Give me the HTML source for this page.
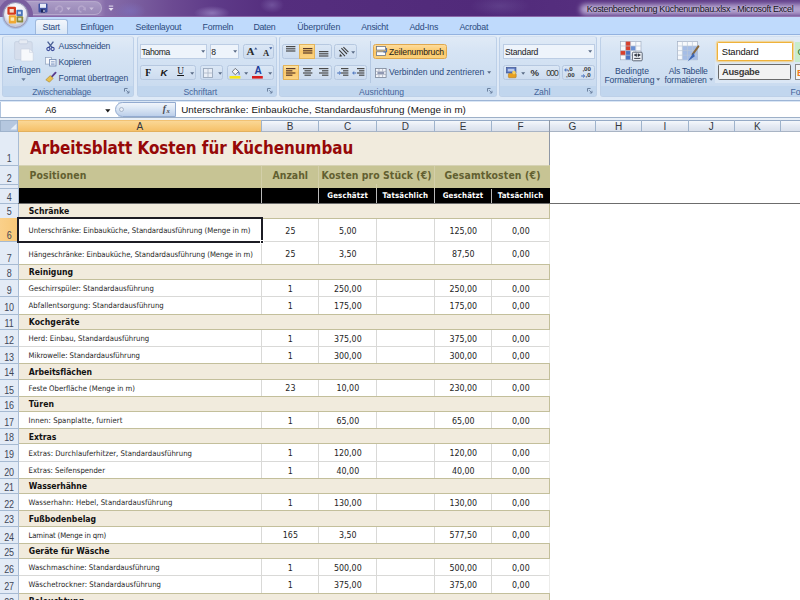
<!DOCTYPE html>
<html lang="de">
<head>
<meta charset="utf-8">
<title>Kostenberechnung Küchenumbau.xlsx - Microsoft Excel</title>
<style>
html,body{margin:0;padding:0;background:#fff;}
body{width:800px;height:600px;overflow:hidden;font-family:"Liberation Sans",sans-serif;}
#app{position:relative;width:800px;height:600px;overflow:hidden;background:#fff;}
#app div,#app span.t,#app svg{position:absolute;box-sizing:border-box;}
#app svg{overflow:visible;}
.t{white-space:pre;}
.num{transform:translateX(-50%);}
.ul{text-decoration:underline;}
.ttl{text-shadow:0 0 2px rgba(225,215,240,.8);}
.titlebar{background:
 radial-gradient(ellipse 16px 9px at 130px 11px,rgba(125,110,185,.75),rgba(125,110,185,0) 100%),
 radial-gradient(ellipse 18px 7px at 212px 13px,rgba(160,140,200,.7),rgba(160,140,200,0) 100%),
 radial-gradient(ellipse 12px 8px at 272px 5px,rgba(130,105,175,.6),rgba(130,105,175,0) 100%),
 radial-gradient(ellipse 30px 10px at 500px 6px,rgba(110,85,155,.45),rgba(110,85,155,0) 100%),
 linear-gradient(90deg,#977fb6 0%,#957db4 12.5%,#866daa 13.2%,#7a5e9f 17%,#6c4a92 21.5%,#5e3a88 27%,#552e7e 34%,#512a7a 60%,#552e7e 72%,#613e8a 100%);border-bottom:1px solid #8a68a8;}
.tglow{background:rgba(182,168,210,.95);filter:blur(2.6px);border-radius:6px;}
.qat{border-radius:0 7px 7px 0;background:linear-gradient(#ab9cc6,#a191be 50%,#9a8ab8);border:1px solid #b5a8cc;border-left:none;}
.tabrow{background:#bfdafc;}
.tabsel{border:1px solid #9fb9dc;border-bottom:none;border-radius:3px 3px 0 0;background:linear-gradient(#f2f6fc,#e2ecf8 60%,#d9e6f5);}
.ribbon{background:linear-gradient(#e3edf8,#dde8f6 50%,#dfeaf7);border-top:1px solid #93b2e0;}
.grp{border:1px solid #bdd0e8;border-top-color:#d3e0f0;border-radius:3px;background:linear-gradient(#e0eaf6,#d6e4f4 25%,#cbdcf0 82%);overflow:hidden;}
.glab{background:#c1d6ee;}
.combo{background:#eef4fb;border:1px solid #bccde4;}
.btng{border:1px solid #b6c8e0;border-radius:2.5px;background:linear-gradient(#dbe7f5,#cddcef);}
.hot{background:linear-gradient(#fde3a4,#fbc96a 50%,#fbd384);border:1px solid #e3b45c;}
.hotbtn{background:linear-gradient(#fddc9c,#fbc766 55%,#fbd27e);border:1px solid #dfa84e;border-radius:2.5px;}
.gal{background:rgba(228,238,249,.6);}
.fbar{background:#d9e6f5;}
.fxpill{border:1px solid #93abd0;border-radius:8px 0 0 8px;background:linear-gradient(#f1f5fb,#dde8f5 40%,#bccfea);}
.colhead{background:linear-gradient(#f5f8fc,#e6ebf4 45%,#d9e0ec);border-top:1px solid #96aac6;border-bottom:1px solid #a9b4c4;}
.corner{background:#b5c7df;border:1px solid #9fb3cc;}
.colsel{background:linear-gradient(#fad796,#f8cc7e 50%,#f5c069);border-top:1px solid #f1c273;border-bottom:1px solid #e3b05c;}
.rowhead{background:#e3ebf6;}
.rowsel{background:linear-gradient(90deg,#fad08a,#f8c878);border-right:1px solid #e0a850;}
.rn{letter-spacing:-0.3px;transform:translateX(-50%) scaleX(.86);}
.obsh{border-radius:50%;background:rgba(140,156,188,.4);}
.ob{border-radius:50%;border:0.7px solid #9a96b4;background:radial-gradient(circle at 50% 40%,#fff 0,#f5f6fa 40%,#e4e7f0 56%,#c6cadb 68%);}

</style>
</head>
<body>
<div id="app">
<div class="titlebar" style="left:0px;top:0px;width:800px;height:16.6px;"></div>
<div class="tglow" style="left:580px;top:4.4px;width:240px;height:10.2px;"></div>
<div class="qat" style="left:26px;top:1px;width:76.4px;height:13.6px;"></div>
<div style="left:-1.6px;top:-2.0px;width:34.4px;height:34.4px;border-radius:50%;background:radial-gradient(circle,#7a5e9f 0,#7a5e9f 82%,rgba(125,98,164,.5) 92%,rgba(125,98,164,0) 100%);"></div>
<span class="t ttl" style="left:586.8px;top:2.6px;font-size:9.0px;line-height:12.6px;color:#141018;letter-spacing:-0.324px;">Kostenberechnung Küchenumbau.xlsx - Microsoft Excel</span>
<svg style="left:38px;top:3px;width:10px;height:10px" viewBox="0 0 10 10"><rect x="0.5" y="0.5" width="9" height="9" rx="1" fill="#3d4f9e"/><rect x="2" y="0.8" width="6" height="4" fill="#e8ecf8"/><rect x="3" y="6.3" width="4" height="3.2" fill="#1c2458"/><rect x="5.4" y="6.8" width="1.2" height="2.2" fill="#dfe3f3"/></svg>
<svg style="left:55px;top:4px;width:9px;height:9px" viewBox="0 0 9 9"><path d="M1.5 5.5 A3 3 0 1 1 4.5 8" fill="none" stroke="#b5a6cc" stroke-width="1.5"/><path d="M0 3 L3.4 5.6 L0.2 6.8 Z" fill="#b5a6cc"/></svg>
<svg style="left:66px;top:7px;width:5px;height:4px" viewBox="0 0 5 4"><path d="M0.3 0.5 L4.7 0.5 L2.5 3.2 Z" fill="#c9bedb"/></svg>
<svg style="left:77px;top:4px;width:9px;height:9px" viewBox="0 0 9 9"><path d="M7.5 5.5 A3 3 0 1 0 4.5 8" fill="none" stroke="#b5a6cc" stroke-width="1.5"/><path d="M9 3 L5.6 5.6 L8.8 6.8 Z" fill="#b5a6cc"/></svg>
<svg style="left:89px;top:7px;width:5px;height:4px" viewBox="0 0 5 4"><path d="M0.3 0.5 L4.7 0.5 L2.5 3.2 Z" fill="#c9bedb"/></svg>
<svg style="left:107.5px;top:5px;width:6px;height:7px" viewBox="0 0 6 7"><rect x="0.8" y="0.6" width="4.4" height="1" fill="#e6e0f0"/><path d="M0.5 3 L5.5 3 L3 6 Z" fill="#e6e0f0"/></svg>
<div class="tabrow" style="left:0px;top:16.6px;width:800px;height:18px;"></div>
<div class="tabsel" style="left:35px;top:19.2px;width:33.2px;height:16px;"></div>
<span class="t" style="left:42.6px;top:21.05px;font-size:8.8px;line-height:12.3px;color:#2b4a7d;letter-spacing:-0.276px;">Start</span>
<span class="t" style="left:80.4px;top:21.05px;font-size:8.8px;line-height:12.3px;color:#2b4a7d;letter-spacing:-0.217px;">Einfügen</span>
<span class="t" style="left:135.6px;top:21.05px;font-size:8.8px;line-height:12.3px;color:#2b4a7d;letter-spacing:-0.235px;">Seitenlayout</span>
<span class="t" style="left:202.6px;top:21.05px;font-size:8.8px;line-height:12.3px;color:#2b4a7d;letter-spacing:-0.238px;">Formeln</span>
<span class="t" style="left:253.4px;top:21.05px;font-size:8.8px;line-height:12.3px;color:#2b4a7d;letter-spacing:-0.297px;">Daten</span>
<span class="t" style="left:297.2px;top:21.05px;font-size:8.8px;line-height:12.3px;color:#2b4a7d;letter-spacing:-0.102px;">Überprüfen</span>
<span class="t" style="left:361.2px;top:21.05px;font-size:8.8px;line-height:12.3px;color:#2b4a7d;letter-spacing:-0.266px;">Ansicht</span>
<span class="t" style="left:409.4px;top:21.05px;font-size:8.8px;line-height:12.3px;color:#2b4a7d;letter-spacing:-0.218px;">Add-Ins</span>
<span class="t" style="left:459.4px;top:21.05px;font-size:8.8px;line-height:12.3px;color:#2b4a7d;letter-spacing:-0.218px;">Acrobat</span>
<div class="obsh" style="left:1.6px;top:2.0px;width:27.4px;height:27.4px;"></div>
<div class="ob" style="left:2.6px;top:2.4px;width:25.2px;height:25.2px;"></div>
<svg style="left:1px;top:0px;width:30px;height:30px" viewBox="0 0 30 30"><rect x="6.4" y="6.8" width="8.6" height="8" rx="1.2" fill="#d43a1e"/><rect x="8.6" y="9" width="4.2" height="3.6" fill="#f3d9c8"/>
<rect x="15.4" y="9.8" width="6.4" height="6.4" rx="1" fill="#4a74b8"/><rect x="17" y="11.6" width="3" height="2.6" fill="#c8d6ee"/>
<rect x="7.8" y="15.2" width="7.6" height="8.2" rx="1" fill="#f0a832"/><rect x="9.6" y="17.4" width="3.6" height="3.4" fill="#fbe9b4"/>
<rect x="15.6" y="16.2" width="6.6" height="6.2" rx="1" fill="#8a8a3c"/><rect x="17.2" y="17.8" width="3.2" height="2.8" fill="#d8dcc0"/></svg>
<div class="ribbon" style="left:0px;top:34.2px;width:800px;height:66px;"></div>
<div class="grp" style="left:1.6px;top:35.6px;width:132.6px;height:61.8px;"><div class="glab" style="left:0;right:0;bottom:0;height:10.4px"></div></div>
<span class="t" style="left:32.2px;top:86.2px;font-size:8.6px;line-height:12.0px;color:#45659a;letter-spacing:-0.236px;">Zwischenablage</span>
<svg style="left:124.4px;top:87.9px;width:5.4px;height:5.4px" viewBox="0 0 5.4 5.4"><path d="M0.5 3.6 V0.5 H3.6" fill="none" stroke="#6a7f9e" stroke-width="1"/><path d="M2.2 2.2 L5 5 M5 2.8 V5 H2.8" fill="none" stroke="#6a7f9e" stroke-width="0.9"/></svg>
<div class="grp" style="left:136.8px;top:35.6px;width:140.4px;height:61.8px;"><div class="glab" style="left:0;right:0;bottom:0;height:10.4px"></div></div>
<span class="t" style="left:183.4px;top:86.2px;font-size:8.6px;line-height:12.0px;color:#45659a;letter-spacing:-0.079px;">Schriftart</span>
<svg style="left:267.4px;top:87.9px;width:5.4px;height:5.4px" viewBox="0 0 5.4 5.4"><path d="M0.5 3.6 V0.5 H3.6" fill="none" stroke="#6a7f9e" stroke-width="1"/><path d="M2.2 2.2 L5 5 M5 2.8 V5 H2.8" fill="none" stroke="#6a7f9e" stroke-width="0.9"/></svg>
<div class="grp" style="left:279.2px;top:35.6px;width:217.4px;height:61.8px;"><div class="glab" style="left:0;right:0;bottom:0;height:10.4px"></div></div>
<span class="t" style="left:359.0px;top:86.2px;font-size:8.6px;line-height:12.0px;color:#45659a;letter-spacing:-0.036px;">Ausrichtung</span>
<svg style="left:486.8px;top:87.9px;width:5.4px;height:5.4px" viewBox="0 0 5.4 5.4"><path d="M0.5 3.6 V0.5 H3.6" fill="none" stroke="#6a7f9e" stroke-width="1"/><path d="M2.2 2.2 L5 5 M5 2.8 V5 H2.8" fill="none" stroke="#6a7f9e" stroke-width="0.9"/></svg>
<div class="grp" style="left:499.4px;top:35.6px;width:97.8px;height:61.8px;"><div class="glab" style="left:0;right:0;bottom:0;height:10.4px"></div></div>
<span class="t" style="left:534.0px;top:86.2px;font-size:8.6px;line-height:12.0px;color:#45659a;letter-spacing:-0.130px;">Zahl</span>
<svg style="left:587.4px;top:87.9px;width:5.4px;height:5.4px" viewBox="0 0 5.4 5.4"><path d="M0.5 3.6 V0.5 H3.6" fill="none" stroke="#6a7f9e" stroke-width="1"/><path d="M2.2 2.2 L5 5 M5 2.8 V5 H2.8" fill="none" stroke="#6a7f9e" stroke-width="0.9"/></svg>
<div class="grp" style="left:600.2px;top:35.6px;width:229.8px;height:61.8px;"><div class="glab" style="left:0;right:0;bottom:0;height:10.4px"></div></div>
<span class="t" style="left:790.6px;top:86.2px;font-size:8.6px;line-height:12.0px;color:#45659a;">Fo</span>
<svg style="left:14px;top:39px;width:22px;height:27px" viewBox="0 0 22 27"><rect x="0.6" y="2.6" width="17.6" height="18" rx="1.5" fill="#d6deec" stroke="#c3cee0" stroke-width="0.7"/>
<rect x="5" y="0.8" width="8.6" height="4" rx="1.2" fill="#e6ebf3" stroke="#bcc8da" stroke-width="0.6"/>
<path d="M7 10 H15.6 L19.2 13.4 V22 H7 Z" fill="#f7f9fc" stroke="#c9d2e0" stroke-width="0.6"/><path d="M15.6 10 V13.4 H19.2" fill="none" stroke="#c9d2e0" stroke-width="0.6"/></svg>
<span class="t" style="left:7.0px;top:64.1px;font-size:8.6px;line-height:12.0px;color:#2b4a7d;letter-spacing:-0.067px;">Einfügen</span>
<svg style="left:21px;top:77.6px;width:5px;height:3.4px" viewBox="0 0 5 3.4"><path d="M0.3 0.3 L4.7 0.3 L2.5 3 Z" fill="#6a7f9e"/></svg>
<span class="t" style="left:58.6px;top:40.2px;font-size:8.6px;line-height:12.0px;color:#2b4a7d;letter-spacing:-0.200px;">Ausschneiden</span>
<span class="t" style="left:58.6px;top:55.9px;font-size:8.6px;line-height:12.0px;color:#2b4a7d;letter-spacing:-0.251px;">Kopieren</span>
<span class="t" style="left:58.6px;top:71.6px;font-size:8.6px;line-height:12.0px;color:#2b4a7d;letter-spacing:-0.092px;">Format übertragen</span>
<svg style="left:46px;top:41px;width:9px;height:10px" viewBox="0 0 9 10"><path d="M1.6 0.6 L6 6.4 M7.4 0.6 L3 6.4" stroke="#4a5f94" stroke-width="1.3" fill="none"/><circle cx="2.4" cy="8" r="1.6" fill="none" stroke="#3a4a9a" stroke-width="1.1"/><circle cx="6.6" cy="8" r="1.6" fill="none" stroke="#3a4a9a" stroke-width="1.1"/></svg>
<svg style="left:44.6px;top:57px;width:12px;height:10px" viewBox="0 0 12 10"><rect x="0.5" y="0.5" width="6" height="6.6" fill="#f6f8fc" stroke="#8fa0bc" stroke-width="0.7"/><rect x="4.6" y="2.4" width="6.4" height="6.6" fill="#eef2f9" stroke="#6f86ae" stroke-width="0.8"/><path d="M6 4.6 H9.6 M6 6.2 H9.6 M6 7.6 H9.6" stroke="#7f98c4" stroke-width="0.7"/></svg>
<svg style="left:45px;top:72.4px;width:12px;height:11px" viewBox="0 0 12 11"><path d="M10.6 0.6 L6.4 5.2" stroke="#5a3c8c" stroke-width="1.8" stroke-linecap="round"/><path d="M5.2 3.6 L8.2 6.4 L4.4 10.2 L0.8 7.8 Z" fill="#e8c050" stroke="#a8842c" stroke-width="0.6"/></svg>
<div class="combo" style="left:139.6px;top:44.4px;width:67.6px;height:14.8px;"></div>
<div class="combo" style="left:209.6px;top:44.4px;width:29.6px;height:14.8px;"></div>
<span class="t" style="left:141.6px;top:46.4px;font-size:8.6px;line-height:12.0px;color:#1a1a1a;letter-spacing:-0.363px;">Tahoma</span>
<span class="t" style="left:211.2px;top:46.4px;font-size:8.6px;line-height:12.0px;color:#1a1a1a;letter-spacing:-0.181px;">8</span>
<svg style="left:201.4px;top:50.4px;width:4.4px;height:3px" viewBox="0 0 4.4 3"><path d="M0.2 0.3 L4.2 0.3 L2.2 2.8 Z" fill="#5a6b86"/></svg>
<svg style="left:232.8px;top:50.4px;width:4.4px;height:3px" viewBox="0 0 4.4 3"><path d="M0.2 0.3 L4.2 0.3 L2.2 2.8 Z" fill="#5a6b86"/></svg>
<div class="btng" style="left:243.2px;top:44.4px;width:31px;height:14.8px;"></div>
<span class="t" style="left:246.4px;top:44.3px;font-size:11px;line-height:15.4px;color:#2a2a2a;font-weight:bold;font-family:'Liberation Serif',serif;">A</span>
<span class="t" style="left:263.0px;top:46.8px;font-size:8.6px;line-height:12.0px;color:#2a2a2a;font-weight:bold;font-family:'Liberation Serif',serif;">A</span>
<svg style="left:254.4px;top:47.2px;width:3.6px;height:2.6px" viewBox="0 0 3.6 2.6"><path d="M0.2 2.4 L3.4 2.4 L1.8 0.2 Z" fill="#3a5a9a"/></svg>
<svg style="left:269.2px;top:47.4px;width:3.6px;height:2.6px" viewBox="0 0 3.6 2.6"><path d="M0.2 0.2 L3.4 0.2 L1.8 2.4 Z" fill="#3a5a9a"/></svg>
<div class="btng" style="left:139.6px;top:64.6px;width:56.6px;height:15.6px;"></div>
<div class="btng" style="left:199.6px;top:64.6px;width:23.6px;height:15.6px;"></div>
<div class="btng" style="left:226.6px;top:64.6px;width:47.6px;height:15.6px;"></div>
<span class="t" style="left:145.2px;top:65.7px;font-size:9.6px;line-height:13.4px;color:#151515;font-weight:bold;font-family:'Liberation Serif',serif;">F</span>
<span class="t" style="left:160.6px;top:65.7px;font-size:9.6px;line-height:13.4px;color:#151515;font-weight:bold;font-style:italic;">K</span>
<span class="t ul" style="left:177.2px;top:65.4px;font-size:9.4px;line-height:13.2px;color:#151515;font-family:'Liberation Serif',serif;">U</span>
<svg style="left:190.0px;top:71.6px;width:4.4px;height:3px" viewBox="0 0 4.4 3"><path d="M0.2 0.3 L4.2 0.3 L2.2 2.8 Z" fill="#5a6b86"/></svg>
<svg style="left:217.6px;top:71.6px;width:4.4px;height:3px" viewBox="0 0 4.4 3"><path d="M0.2 0.3 L4.2 0.3 L2.2 2.8 Z" fill="#5a6b86"/></svg>
<svg style="left:244.2px;top:71.6px;width:4.4px;height:3px" viewBox="0 0 4.4 3"><path d="M0.2 0.3 L4.2 0.3 L2.2 2.8 Z" fill="#5a6b86"/></svg>
<svg style="left:267.8px;top:71.6px;width:4.4px;height:3px" viewBox="0 0 4.4 3"><path d="M0.2 0.3 L4.2 0.3 L2.2 2.8 Z" fill="#5a6b86"/></svg>
<svg style="left:203.4px;top:67.6px;width:10px;height:10px" viewBox="0 0 10 10"><rect x="0.5" y="0.5" width="9" height="9" fill="#e9eef6" stroke="#9aa8bc" stroke-width="0.9"/><path d="M5 0.5 V9.5 M0.5 5 H9.5" stroke="#a8b4c6" stroke-width="0.8"/></svg>
<svg style="left:229.4px;top:66.4px;width:12px;height:13px" viewBox="0 0 12 13"><path d="M3.2 5.8 L6.2 2.4 L9.6 5.4 L6.4 8.8 Z" fill="#f6f6f6" stroke="#555b66" stroke-width="0.8"/><path d="M9.4 5.6 Q11 7.6 10 8.8" stroke="#4a6ab0" stroke-width="1.1" fill="none"/><rect x="0.6" y="10" width="10.8" height="2.6" fill="#f6e616"/></svg>
<span class="t" style="left:254.6px;top:64.2px;font-size:10px;line-height:14.0px;color:#1f3f9a;font-weight:bold;">A</span>
<svg style="left:252.4px;top:76.4px;width:10.8px;height:2.6px" viewBox="0 0 10.8 2.6"><rect x="0" y="0" width="10.8" height="2.6" fill="#d81e1e"/></svg>
<div class="btng" style="left:282.4px;top:44.0px;width:49.4px;height:15.2px;"></div>
<div class="hot" style="left:299.0px;top:44.0px;width:16.4px;height:15.2px;"></div>
<div class="btng" style="left:334.4px;top:44.0px;width:22.8px;height:15.2px;"></div>
<div class="btng" style="left:282.4px;top:64.6px;width:49.4px;height:15.6px;"></div>
<div class="hot" style="left:282.6px;top:64.6px;width:16.2px;height:15.6px;"></div>
<div class="btng" style="left:334.4px;top:64.6px;width:32.8px;height:15.6px;"></div>
<svg style="left:286px;top:46.2px;width:11px;height:6.6px" viewBox="0 0 11 6.6"><rect x="0" y="0.00" width="9.4" height="1.2" fill="#4a4a4a"/><rect x="0" y="2.20" width="9.4" height="1.2" fill="#4a4a4a"/><rect x="0" y="4.40" width="9.4" height="1.2" fill="#4a4a4a"/></svg>
<svg style="left:302.6px;top:48.4px;width:11px;height:6.6px" viewBox="0 0 11 6.6"><rect x="0" y="0.00" width="9.4" height="1.2" fill="#5a3a2a"/><rect x="0" y="2.20" width="9.4" height="1.2" fill="#5a3a2a"/><rect x="0" y="4.40" width="9.4" height="1.2" fill="#5a3a2a"/></svg>
<svg style="left:318.8px;top:51.2px;width:11px;height:6.6px" viewBox="0 0 11 6.6"><rect x="0" y="0.00" width="9.4" height="1.2" fill="#4a4a4a"/><rect x="0" y="2.20" width="9.4" height="1.2" fill="#4a4a4a"/><rect x="0" y="4.40" width="9.4" height="1.2" fill="#4a4a4a"/></svg>
<svg style="left:286px;top:67.6px;width:11px;height:8.8px" viewBox="0 0 11 8.8"><rect x="0" y="0.00" width="9.4" height="1.2" fill="#5a3a2a"/><rect x="0" y="2.20" width="6.4" height="1.2" fill="#5a3a2a"/><rect x="0" y="4.40" width="9.4" height="1.2" fill="#5a3a2a"/><rect x="0" y="6.60" width="6.4" height="1.2" fill="#5a3a2a"/></svg>
<svg style="left:302.6px;top:67.6px;width:11px;height:8.8px" viewBox="0 0 11 8.8"><rect x="0" y="0.00" width="9.4" height="1.2" fill="#4a4a4a"/><rect x="1.5" y="2.20" width="6.4" height="1.2" fill="#4a4a4a"/><rect x="0" y="4.40" width="9.4" height="1.2" fill="#4a4a4a"/><rect x="1.5" y="6.60" width="6.4" height="1.2" fill="#4a4a4a"/></svg>
<svg style="left:318.8px;top:67.6px;width:11px;height:8.8px" viewBox="0 0 11 8.8"><rect x="0" y="0.00" width="9.4" height="1.2" fill="#4a4a4a"/><rect x="3" y="2.20" width="6.4" height="1.2" fill="#4a4a4a"/><rect x="0" y="4.40" width="9.4" height="1.2" fill="#4a4a4a"/><rect x="3" y="6.60" width="6.4" height="1.2" fill="#4a4a4a"/></svg>
<svg style="left:337.6px;top:46.6px;width:12px;height:11px" viewBox="0 0 12 11"><path d="M1.2 3.2 L7 9.2 M3.4 1.2 L9 7 M5.4 0.2 L10.4 5.2" stroke="#3e3e3e" stroke-width="1.1" fill="none"/><path d="M1.4 9.8 L4.4 9.2 L2 6.8 Z" fill="#3e3e3e"/></svg>
<svg style="left:351.4px;top:50.6px;width:4.4px;height:3px" viewBox="0 0 4.4 3"><path d="M0.2 0.3 L4.2 0.3 L2.2 2.8 Z" fill="#5a6b86"/></svg>
<svg style="left:340.6px;top:67.6px;width:11px;height:8.8px" viewBox="0 0 11 8.8"><rect x="0" y="0.00" width="7.4" height="1.2" fill="#4a4a4a"/><rect x="2" y="2.20" width="5.4" height="1.2" fill="#4a4a4a"/><rect x="0" y="4.40" width="7.4" height="1.2" fill="#4a4a4a"/><rect x="2" y="6.60" width="5.4" height="1.2" fill="#4a4a4a"/></svg>
<svg style="left:356.6px;top:67.6px;width:11px;height:8.8px" viewBox="0 0 11 8.8"><rect x="0" y="0.00" width="7.4" height="1.2" fill="#4a4a4a"/><rect x="2" y="2.20" width="5.4" height="1.2" fill="#4a4a4a"/><rect x="0" y="4.40" width="7.4" height="1.2" fill="#4a4a4a"/><rect x="2" y="6.60" width="5.4" height="1.2" fill="#4a4a4a"/></svg>
<svg style="left:336.6px;top:70.6px;width:4.4px;height:4px" viewBox="0 0 4.4 4"><path d="M0.2 2 H3 M2.2 0.6 L3.8 2 L2.2 3.4" stroke="#3a66b8" stroke-width="1" fill="none"/></svg>
<svg style="left:352.4px;top:70.6px;width:4.4px;height:4px" viewBox="0 0 4.4 4"><path d="M4.2 2 H1.4 M2.2 0.6 L0.6 2 L2.2 3.4" stroke="#3a66b8" stroke-width="1" fill="none"/></svg>
<div style="left:370.0px;top:41.4px;width:1px;height:42px;background:#b4c8e2;"></div>
<div class="hotbtn" style="left:373.0px;top:43.8px;width:73.8px;height:15.4px;"></div>
<svg style="left:375.6px;top:46.4px;width:11.4px;height:10.4px" viewBox="0 0 11.4 10.4"><rect x="0.5" y="0.5" width="9" height="3.6" fill="#fdfdfd" stroke="#6a7486" stroke-width="0.8"/><rect x="0.5" y="5.8" width="9" height="3.8" fill="#fdfdfd" stroke="#6a7486" stroke-width="0.8"/><path d="M10.6 2 V6 H7.4" stroke="#3a66b8" stroke-width="1" fill="none"/></svg>
<span class="t" style="left:389.0px;top:45.6px;font-size:8.6px;line-height:12.0px;color:#1c1c1c;letter-spacing:-0.142px;">Zeilenumbruch</span>
<svg style="left:375.4px;top:67.6px;width:11.6px;height:10px" viewBox="0 0 11.6 10"><rect x="0.5" y="0.5" width="10.6" height="9" fill="#f4f6fa" stroke="#7a8598" stroke-width="0.8"/><path d="M0.5 3.4 H11 M0.5 6.6 H11 M4 0.5 V3.4 M7.6 0.5 V3.4 M4 6.6 V9.5 M7.6 6.6 V9.5" stroke="#8e99ad" stroke-width="0.6"/><path d="M2.4 5 H9.2" stroke="#2a3a6a" stroke-width="1"/></svg>
<span class="t" style="left:389.0px;top:66.4px;font-size:8.6px;line-height:12.0px;color:#2b4a7d;letter-spacing:-0.035px;">Verbinden und zentrieren</span>
<svg style="left:487.4px;top:71.4px;width:4.4px;height:3px" viewBox="0 0 4.4 3"><path d="M0.2 0.3 L4.2 0.3 L2.2 2.8 Z" fill="#5a6b86"/></svg>
<div class="combo" style="left:502.6px;top:44.0px;width:92.2px;height:15.2px;"></div>
<span class="t" style="left:505.0px;top:46.3px;font-size:8.6px;line-height:12.0px;color:#1a1a1a;letter-spacing:-0.211px;">Standard</span>
<svg style="left:587.6px;top:50.4px;width:4.4px;height:3px" viewBox="0 0 4.4 3"><path d="M0.2 0.3 L4.2 0.3 L2.2 2.8 Z" fill="#5a6b86"/></svg>
<div class="btng" style="left:502.6px;top:64.6px;width:57.2px;height:15.6px;"></div>
<div class="btng" style="left:562.4px;top:64.6px;width:32.4px;height:15.6px;"></div>
<svg style="left:505.6px;top:66.6px;width:11px;height:11.4px" viewBox="0 0 11 11.4"><rect x="0.4" y="0.4" width="9.6" height="5.6" fill="#5a78c0" stroke="#3a4f8a" stroke-width="0.6"/><rect x="1.8" y="1.8" width="6.6" height="2.6" fill="#b8c8ea"/><rect x="2.4" y="6.4" width="7.8" height="4.4" rx="1" fill="#e8a020" stroke="#a87010" stroke-width="0.5"/><circle cx="8" cy="5.6" r="1.8" fill="#f6d060"/></svg>
<svg style="left:520.6px;top:71.6px;width:4.4px;height:3px" viewBox="0 0 4.4 3"><path d="M0.2 0.3 L4.2 0.3 L2.2 2.8 Z" fill="#5a6b86"/></svg>
<span class="t" style="left:530.6px;top:65.9px;font-size:9.6px;line-height:13.4px;color:#333;font-weight:bold;letter-spacing:0.069px;">%</span>
<span class="t" style="left:546.2px;top:66.6px;font-size:8.6px;line-height:12.0px;color:#333;letter-spacing:-0.915px;">000</span>
<span class="t" style="left:567.6px;top:65.25px;font-size:6.2px;line-height:8.7px;color:#333;font-weight:bold;">,0</span>
<span class="t" style="left:566.0px;top:71.05px;font-size:6.2px;line-height:8.7px;color:#333;font-weight:bold;">,00</span>
<span class="t" style="left:582.4px;top:65.25px;font-size:6.2px;line-height:8.7px;color:#333;font-weight:bold;">,00</span>
<span class="t" style="left:585.6px;top:71.05px;font-size:6.2px;line-height:8.7px;color:#333;font-weight:bold;">,0</span>
<svg style="left:564.2px;top:67.6px;width:4.4px;height:4px" viewBox="0 0 4.4 4"><path d="M4.2 2 H1.4 M2.2 0.6 L0.6 2 L2.2 3.4" stroke="#3a66b8" stroke-width="1" fill="none"/></svg>
<svg style="left:580.8px;top:73.6px;width:4.4px;height:4px" viewBox="0 0 4.4 4"><path d="M0.2 2 H3 M2.2 0.6 L3.8 2 L2.2 3.4" stroke="#3a66b8" stroke-width="1" fill="none"/></svg>
<svg style="left:620px;top:41px;width:23px;height:21px" viewBox="0 0 23 21"><rect x="0.4" y="0.4" width="20.6" height="18.4" fill="#f7f9fc" stroke="#a3b0c4" stroke-width="0.7"/>
<rect x="5.6" y="0.6" width="5" height="9" fill="#d8402c"/><rect x="5.6" y="9.6" width="5" height="9" fill="#4a74c4"/><rect x="10.6" y="5" width="5" height="4.6" fill="#6a90d4"/><rect x="0.6" y="9.6" width="5" height="4.6" fill="#d8402c"/>
<path d="M0.4 5 H21 M0.4 9.6 H21 M0.4 14.2 H21 M5.6 0.4 V18.8 M10.6 0.4 V18.8 M15.8 0.4 V18.8" stroke="#b6c2d4" stroke-width="0.7"/>
<rect x="12.4" y="11.2" width="9.8" height="8.6" rx="1" fill="#eef1f6" stroke="#4e5868" stroke-width="0.9"/><path d="M14.2 14 L16.6 12.8 V15.4 Z M20.4 14 L18 12.8 V15.4 Z" stroke="#2a2f3a" stroke-width="0.6" fill="#2a2f3a"/><path d="M14.2 17.4 H20.4" stroke="#2a2f3a" stroke-width="0.9"/></svg>
<span class="t" style="left:615.0px;top:64.8px;font-size:8.6px;line-height:12.0px;color:#2b4a7d;letter-spacing:0.008px;">Bedingte</span>
<span class="t" style="left:604.4px;top:73.8px;font-size:8.6px;line-height:12.0px;color:#2b4a7d;letter-spacing:-0.092px;">Formatierung</span>
<svg style="left:656.2px;top:78.4px;width:4.4px;height:3px" viewBox="0 0 4.4 3"><path d="M0.2 0.3 L4.2 0.3 L2.2 2.8 Z" fill="#5a6b86"/></svg>
<svg style="left:677px;top:41px;width:23px;height:22px" viewBox="0 0 23 22"><rect x="0.4" y="0.4" width="20" height="18.4" fill="#f7f9fc" stroke="#a3b0c4" stroke-width="0.7"/>
<rect x="5.4" y="5" width="15" height="13.8" fill="#a5bde6"/>
<path d="M0.4 5 H20.4 M0.4 9.6 H20.4 M0.4 14.2 H20.4 M5.4 0.4 V18.8 M10.4 0.4 V18.8 M15.4 0.4 V18.8" stroke="#bcc8da" stroke-width="0.7"/>
<path d="M21.4 5.4 L15.6 13.4" stroke="#8a6a3c" stroke-width="2" stroke-linecap="round"/><path d="M16.6 11.6 L10.6 20.4 L17.8 15.2 Z" fill="#3c66b4"/></svg>
<span class="t" style="left:668.8px;top:64.8px;font-size:8.6px;line-height:12.0px;color:#2b4a7d;letter-spacing:-0.237px;">Als Tabelle</span>
<span class="t" style="left:664.4px;top:73.8px;font-size:8.6px;line-height:12.0px;color:#2b4a7d;letter-spacing:-0.097px;">formatieren</span>
<svg style="left:709.0px;top:78.4px;width:4.4px;height:3px" viewBox="0 0 4.4 3"><path d="M0.2 0.3 L4.2 0.3 L2.2 2.8 Z" fill="#5a6b86"/></svg>
<div class="gal" style="left:714.6px;top:40.4px;width:90px;height:42.4px;"></div>
<div style="left:716.6px;top:41.8px;width:76px;height:19.6px;background:#fff;border:1.4px solid #efb23a;box-shadow:0 0 1.5px 0.5px rgba(245,200,110,.8);border-radius:1.5px;"></div>
<span class="t" style="left:721.8px;top:44.8px;font-size:9.4px;line-height:13.2px;color:#111;letter-spacing:-0.158px;">Standard</span>
<div style="left:718.4px;top:63.8px;width:72.4px;height:15.8px;background:#f2f2f2;border:1px solid #6a6a6a;border-radius:1.5px;"></div>
<span class="t" style="left:722.0px;top:65.4px;font-size:9.4px;line-height:13.2px;color:#3a3a3a;font-weight:bold;letter-spacing:-0.313px;">Ausgabe</span>
<div style="left:795.2px;top:41.6px;width:10px;height:20.2px;background:#c8eccc;"></div>
<span class="t" style="left:797.4px;top:45.0px;font-size:9.4px;line-height:13.2px;color:#1a6a1a;">G</span>
<div style="left:795.2px;top:64.0px;width:10px;height:16.2px;background:#f3f3f3;border:1px solid #8a8a8a;"></div>
<span class="t" style="left:797.0px;top:65.6px;font-size:9.4px;line-height:13.2px;color:#f07a1c;font-weight:bold;">B</span>
<div class="fbar" style="left:0px;top:99.8px;width:800px;height:19.8px;"></div>
<div style="left:0px;top:100.2px;width:800px;height:1px;background:#9db5d6;"></div>
<div style="left:0px;top:102.2px;width:118px;height:14.8px;background:#fff;border-left:1px solid #b0c4de;"></div>
<div style="left:175.4px;top:102.2px;width:624.6px;height:14.8px;background:#fff;"></div>
<div style="left:0px;top:116.6px;width:800px;height:3.2px;background:#e9f0f8;border-top:1px solid #9db0c8;"></div>
<div class="fxpill" style="left:114.6px;top:101.6px;width:61.4px;height:15.4px;"></div>
<svg style="left:119.0px;top:107.4px;width:5px;height:5px" viewBox="0 0 5 5"><circle cx="2.5" cy="2.5" r="2" fill="#e8eef6" stroke="#9aaac0" stroke-width="0.8"/></svg>
<span class="t" style="left:45.2px;top:103.75px;font-size:9.2px;line-height:12.9px;color:#141414;letter-spacing:-0.025px;">A6</span>
<svg style="left:105.2px;top:108.6px;width:5.6px;height:3.6px" viewBox="0 0 5.6 3.6"><path d="M0.2 0.3 L5.4 0.3 L2.8 3.4 Z" fill="#1a1a1a"/></svg>
<span class="t" style="left:162.8px;top:102.3px;font-size:9.6px;line-height:13.4px;color:#4a4a52;font-weight:bold;font-style:italic;font-family:'Liberation Serif',serif;">f</span>
<span class="t" style="left:166.6px;top:106.0px;font-size:6.6px;line-height:9.2px;color:#4a4a52;font-weight:bold;font-style:italic;font-family:'Liberation Serif',serif;">x</span>
<span class="t" style="left:181.2px;top:103.35px;font-size:9.8px;line-height:13.7px;color:#141414;letter-spacing:0.073px;">Unterschränke: Einbauküche, Standardausführung (Menge in m)</span>
<div class="colhead" style="left:0px;top:119.6px;width:800px;height:12.4px;"></div>
<div class="corner" style="left:0px;top:119.6px;width:18.2px;height:12.4px;"></div>
<svg style="left:9.6px;top:122.6px;width:7px;height:7px" viewBox="0 0 7 7"><path d="M6.6 0.4 V6.6 H0.4 Z" fill="#e6eef8"/></svg>
<div class="colsel" style="left:18.2px;top:119.6px;width:243.4px;height:12.4px;"></div>
<div style="left:261.1px;top:119.6px;width:1px;height:12.4px;background:#9fb3cc;"></div>
<div style="left:318.1px;top:119.6px;width:1px;height:12.4px;background:#9fb3cc;"></div>
<div style="left:376.0px;top:119.6px;width:1px;height:12.4px;background:#9fb3cc;"></div>
<div style="left:433.75px;top:119.6px;width:1px;height:12.4px;background:#9fb3cc;"></div>
<div style="left:491.25px;top:119.6px;width:1px;height:12.4px;background:#9fb3cc;"></div>
<div style="left:548.9px;top:119.6px;width:1px;height:12.4px;background:#9fb3cc;"></div>
<div style="left:595.1px;top:119.6px;width:1px;height:12.4px;background:#9fb3cc;"></div>
<div style="left:641.3px;top:119.6px;width:1px;height:12.4px;background:#9fb3cc;"></div>
<div style="left:687.6px;top:119.6px;width:1px;height:12.4px;background:#9fb3cc;"></div>
<div style="left:733.8px;top:119.6px;width:1px;height:12.4px;background:#9fb3cc;"></div>
<div style="left:780.0px;top:119.6px;width:1px;height:12.4px;background:#9fb3cc;"></div>
<span class="t num" style="left:139.9px;top:119.8px;font-size:10.0px;line-height:14.0px;color:#33373f;">A</span>
<span class="t num" style="left:290.1px;top:119.8px;font-size:10.0px;line-height:14.0px;color:#33373f;">B</span>
<span class="t num" style="left:347.55px;top:119.8px;font-size:10.0px;line-height:14.0px;color:#33373f;">C</span>
<span class="t num" style="left:405.38px;top:119.8px;font-size:10.0px;line-height:14.0px;color:#33373f;">D</span>
<span class="t num" style="left:463.0px;top:119.8px;font-size:10.0px;line-height:14.0px;color:#33373f;">E</span>
<span class="t num" style="left:520.58px;top:119.8px;font-size:10.0px;line-height:14.0px;color:#33373f;">F</span>
<span class="t num" style="left:572.5px;top:119.8px;font-size:10.0px;line-height:14.0px;color:#33373f;">G</span>
<span class="t num" style="left:618.7px;top:119.8px;font-size:10.0px;line-height:14.0px;color:#33373f;">H</span>
<span class="t num" style="left:664.95px;top:119.8px;font-size:10.0px;line-height:14.0px;color:#33373f;">I</span>
<span class="t num" style="left:711.2px;top:119.8px;font-size:10.0px;line-height:14.0px;color:#33373f;">J</span>
<span class="t num" style="left:757.4px;top:119.8px;font-size:10.0px;line-height:14.0px;color:#33373f;">K</span>
<div class="rowhead" style="left:0px;top:132.0px;width:18.2px;height:468.0px;"></div>
<div style="left:0px;top:164.5px;width:18.2px;height:1px;background:#a6bad2;"></div>
<span class="t num rn" style="left:9.2px;top:152.2px;font-size:10.4px;line-height:14.6px;color:#3e4656;">1</span>
<div style="left:0px;top:184.1px;width:18.2px;height:1px;background:#a6bad2;"></div>
<span class="t num rn" style="left:9.2px;top:171.8px;font-size:10.4px;line-height:14.6px;color:#3e4656;">2</span>
<div style="left:0px;top:187.9px;width:18.2px;height:1px;background:#a6bad2;"></div>
<div style="left:0px;top:202.9px;width:18.2px;height:1px;background:#a6bad2;"></div>
<span class="t num rn" style="left:9.2px;top:190.6px;font-size:10.4px;line-height:14.6px;color:#3e4656;">4</span>
<div style="left:0px;top:217.5px;width:18.2px;height:1px;background:#a6bad2;"></div>
<span class="t num rn" style="left:9.2px;top:205.2px;font-size:10.4px;line-height:14.6px;color:#3e4656;">5</span>
<div class="rowsel" style="left:0px;top:218.0px;width:18.2px;height:23.7px;"></div>
<div style="left:0px;top:241.2px;width:18.2px;height:1px;background:#a6bad2;"></div>
<span class="t num rn" style="left:9.2px;top:228.9px;font-size:10.4px;line-height:14.6px;color:#3e4656;">6</span>
<div style="left:0px;top:264.0px;width:18.2px;height:1px;background:#a6bad2;"></div>
<span class="t num rn" style="left:9.2px;top:251.7px;font-size:10.4px;line-height:14.6px;color:#3e4656;">7</span>
<div style="left:0px;top:279.2px;width:18.2px;height:1px;background:#a6bad2;"></div>
<span class="t num rn" style="left:9.2px;top:266.9px;font-size:10.4px;line-height:14.6px;color:#3e4656;">8</span>
<div style="left:0px;top:296.45px;width:18.2px;height:1px;background:#a6bad2;"></div>
<span class="t num rn" style="left:9.2px;top:284.15px;font-size:10.4px;line-height:14.6px;color:#3e4656;">9</span>
<div style="left:0px;top:313.7px;width:18.2px;height:1px;background:#a6bad2;"></div>
<span class="t num rn" style="left:9.2px;top:301.4px;font-size:10.4px;line-height:14.6px;color:#3e4656;">10</span>
<div style="left:0px;top:328.9px;width:18.2px;height:1px;background:#a6bad2;"></div>
<span class="t num rn" style="left:9.2px;top:316.6px;font-size:10.4px;line-height:14.6px;color:#3e4656;">11</span>
<div style="left:0px;top:346.15px;width:18.2px;height:1px;background:#a6bad2;"></div>
<span class="t num rn" style="left:9.2px;top:333.85px;font-size:10.4px;line-height:14.6px;color:#3e4656;">12</span>
<div style="left:0px;top:363.4px;width:18.2px;height:1px;background:#a6bad2;"></div>
<span class="t num rn" style="left:9.2px;top:351.1px;font-size:10.4px;line-height:14.6px;color:#3e4656;">13</span>
<div style="left:0px;top:378.6px;width:18.2px;height:1px;background:#a6bad2;"></div>
<span class="t num rn" style="left:9.2px;top:366.3px;font-size:10.4px;line-height:14.6px;color:#3e4656;">14</span>
<div style="left:0px;top:395.85px;width:18.2px;height:1px;background:#a6bad2;"></div>
<span class="t num rn" style="left:9.2px;top:383.55px;font-size:10.4px;line-height:14.6px;color:#3e4656;">15</span>
<div style="left:0px;top:411.05px;width:18.2px;height:1px;background:#a6bad2;"></div>
<span class="t num rn" style="left:9.2px;top:398.75px;font-size:10.4px;line-height:14.6px;color:#3e4656;">16</span>
<div style="left:0px;top:428.3px;width:18.2px;height:1px;background:#a6bad2;"></div>
<span class="t num rn" style="left:9.2px;top:416.0px;font-size:10.4px;line-height:14.6px;color:#3e4656;">17</span>
<div style="left:0px;top:443.5px;width:18.2px;height:1px;background:#a6bad2;"></div>
<span class="t num rn" style="left:9.2px;top:431.2px;font-size:10.4px;line-height:14.6px;color:#3e4656;">18</span>
<div style="left:0px;top:460.75px;width:18.2px;height:1px;background:#a6bad2;"></div>
<span class="t num rn" style="left:9.2px;top:448.45px;font-size:10.4px;line-height:14.6px;color:#3e4656;">19</span>
<div style="left:0px;top:478.0px;width:18.2px;height:1px;background:#a6bad2;"></div>
<span class="t num rn" style="left:9.2px;top:465.7px;font-size:10.4px;line-height:14.6px;color:#3e4656;">20</span>
<div style="left:0px;top:493.2px;width:18.2px;height:1px;background:#a6bad2;"></div>
<span class="t num rn" style="left:9.2px;top:480.9px;font-size:10.4px;line-height:14.6px;color:#3e4656;">21</span>
<div style="left:0px;top:510.45px;width:18.2px;height:1px;background:#a6bad2;"></div>
<span class="t num rn" style="left:9.2px;top:498.15px;font-size:10.4px;line-height:14.6px;color:#3e4656;">22</span>
<div style="left:0px;top:525.65px;width:18.2px;height:1px;background:#a6bad2;"></div>
<span class="t num rn" style="left:9.2px;top:513.35px;font-size:10.4px;line-height:14.6px;color:#3e4656;">23</span>
<div style="left:0px;top:542.9px;width:18.2px;height:1px;background:#a6bad2;"></div>
<span class="t num rn" style="left:9.2px;top:530.6px;font-size:10.4px;line-height:14.6px;color:#3e4656;">24</span>
<div style="left:0px;top:558.1px;width:18.2px;height:1px;background:#a6bad2;"></div>
<span class="t num rn" style="left:9.2px;top:545.8px;font-size:10.4px;line-height:14.6px;color:#3e4656;">25</span>
<div style="left:0px;top:575.35px;width:18.2px;height:1px;background:#a6bad2;"></div>
<span class="t num rn" style="left:9.2px;top:563.05px;font-size:10.4px;line-height:14.6px;color:#3e4656;">26</span>
<div style="left:0px;top:592.6px;width:18.2px;height:1px;background:#a6bad2;"></div>
<span class="t num rn" style="left:9.2px;top:580.3px;font-size:10.4px;line-height:14.6px;color:#3e4656;">27</span>
<div style="left:0px;top:607.8px;width:18.2px;height:1px;background:#a6bad2;"></div>
<span class="t num rn" style="left:9.2px;top:595.5px;font-size:10.4px;line-height:14.6px;color:#3e4656;">28</span>
<div style="left:18px;top:132px;width:532px;height:33px;background:#f1ebdd;"></div>
<div style="left:18px;top:165px;width:532px;height:24px;background:#c7c494;"></div>
<div style="left:18px;top:188.4px;width:532px;height:15.0px;background:#000;"></div>
<div style="left:18px;top:203px;width:532px;height:16px;background:#f1ebdd;border-bottom:1px solid #c3bf9b;border-right:1px solid #c3bf9b;"></div>
<div style="left:18px;top:241px;width:532px;height:1px;background:#d9d9d7;"></div>
<div style="left:261px;top:219px;width:1px;height:22px;background:#d9d9d7;"></div>
<div style="left:318px;top:219px;width:1px;height:22px;background:#d9d9d7;"></div>
<div style="left:376px;top:219px;width:1px;height:22px;background:#d9d9d7;"></div>
<div style="left:434px;top:219px;width:1px;height:22px;background:#d9d9d7;"></div>
<div style="left:491px;top:219px;width:1px;height:22px;background:#d9d9d7;"></div>
<div style="left:549px;top:219px;width:1px;height:23px;background:#ececea;"></div>
<div style="left:261px;top:242px;width:1px;height:22px;background:#d9d9d7;"></div>
<div style="left:318px;top:242px;width:1px;height:22px;background:#d9d9d7;"></div>
<div style="left:376px;top:242px;width:1px;height:22px;background:#d9d9d7;"></div>
<div style="left:434px;top:242px;width:1px;height:22px;background:#d9d9d7;"></div>
<div style="left:491px;top:242px;width:1px;height:22px;background:#d9d9d7;"></div>
<div style="left:549px;top:242px;width:1px;height:22px;background:#ececea;"></div>
<div style="left:18px;top:264px;width:532px;height:16px;background:#f1ebdd;border-top:1px solid #c3bf9b;border-bottom:1px solid #c3bf9b;border-right:1px solid #c3bf9b;"></div>
<div style="left:18px;top:296px;width:532px;height:1px;background:#d9d9d7;"></div>
<div style="left:261px;top:280px;width:1px;height:16px;background:#d9d9d7;"></div>
<div style="left:318px;top:280px;width:1px;height:16px;background:#d9d9d7;"></div>
<div style="left:376px;top:280px;width:1px;height:16px;background:#d9d9d7;"></div>
<div style="left:434px;top:280px;width:1px;height:16px;background:#d9d9d7;"></div>
<div style="left:491px;top:280px;width:1px;height:16px;background:#d9d9d7;"></div>
<div style="left:549px;top:280px;width:1px;height:17px;background:#ececea;"></div>
<div style="left:261px;top:297px;width:1px;height:17px;background:#d9d9d7;"></div>
<div style="left:318px;top:297px;width:1px;height:17px;background:#d9d9d7;"></div>
<div style="left:376px;top:297px;width:1px;height:17px;background:#d9d9d7;"></div>
<div style="left:434px;top:297px;width:1px;height:17px;background:#d9d9d7;"></div>
<div style="left:491px;top:297px;width:1px;height:17px;background:#d9d9d7;"></div>
<div style="left:549px;top:297px;width:1px;height:17px;background:#ececea;"></div>
<div style="left:18px;top:314px;width:532px;height:16px;background:#f1ebdd;border-top:1px solid #c3bf9b;border-bottom:1px solid #c3bf9b;border-right:1px solid #c3bf9b;"></div>
<div style="left:18px;top:346px;width:532px;height:1px;background:#d9d9d7;"></div>
<div style="left:261px;top:330px;width:1px;height:16px;background:#d9d9d7;"></div>
<div style="left:318px;top:330px;width:1px;height:16px;background:#d9d9d7;"></div>
<div style="left:376px;top:330px;width:1px;height:16px;background:#d9d9d7;"></div>
<div style="left:434px;top:330px;width:1px;height:16px;background:#d9d9d7;"></div>
<div style="left:491px;top:330px;width:1px;height:16px;background:#d9d9d7;"></div>
<div style="left:549px;top:330px;width:1px;height:17px;background:#ececea;"></div>
<div style="left:261px;top:347px;width:1px;height:16px;background:#d9d9d7;"></div>
<div style="left:318px;top:347px;width:1px;height:16px;background:#d9d9d7;"></div>
<div style="left:376px;top:347px;width:1px;height:16px;background:#d9d9d7;"></div>
<div style="left:434px;top:347px;width:1px;height:16px;background:#d9d9d7;"></div>
<div style="left:491px;top:347px;width:1px;height:16px;background:#d9d9d7;"></div>
<div style="left:549px;top:347px;width:1px;height:16px;background:#ececea;"></div>
<div style="left:18px;top:363px;width:532px;height:17px;background:#f1ebdd;border-top:1px solid #c3bf9b;border-bottom:1px solid #c3bf9b;border-right:1px solid #c3bf9b;"></div>
<div style="left:261px;top:380px;width:1px;height:16px;background:#d9d9d7;"></div>
<div style="left:318px;top:380px;width:1px;height:16px;background:#d9d9d7;"></div>
<div style="left:376px;top:380px;width:1px;height:16px;background:#d9d9d7;"></div>
<div style="left:434px;top:380px;width:1px;height:16px;background:#d9d9d7;"></div>
<div style="left:491px;top:380px;width:1px;height:16px;background:#d9d9d7;"></div>
<div style="left:549px;top:380px;width:1px;height:16px;background:#ececea;"></div>
<div style="left:18px;top:396px;width:532px;height:16px;background:#f1ebdd;border-top:1px solid #c3bf9b;border-bottom:1px solid #c3bf9b;border-right:1px solid #c3bf9b;"></div>
<div style="left:261px;top:412px;width:1px;height:16px;background:#d9d9d7;"></div>
<div style="left:318px;top:412px;width:1px;height:16px;background:#d9d9d7;"></div>
<div style="left:376px;top:412px;width:1px;height:16px;background:#d9d9d7;"></div>
<div style="left:434px;top:412px;width:1px;height:16px;background:#d9d9d7;"></div>
<div style="left:491px;top:412px;width:1px;height:16px;background:#d9d9d7;"></div>
<div style="left:549px;top:412px;width:1px;height:16px;background:#ececea;"></div>
<div style="left:18px;top:428px;width:532px;height:16px;background:#f1ebdd;border-top:1px solid #c3bf9b;border-bottom:1px solid #c3bf9b;border-right:1px solid #c3bf9b;"></div>
<div style="left:18px;top:461px;width:532px;height:1px;background:#d9d9d7;"></div>
<div style="left:261px;top:444px;width:1px;height:17px;background:#d9d9d7;"></div>
<div style="left:318px;top:444px;width:1px;height:17px;background:#d9d9d7;"></div>
<div style="left:376px;top:444px;width:1px;height:17px;background:#d9d9d7;"></div>
<div style="left:434px;top:444px;width:1px;height:17px;background:#d9d9d7;"></div>
<div style="left:491px;top:444px;width:1px;height:17px;background:#d9d9d7;"></div>
<div style="left:549px;top:444px;width:1px;height:18px;background:#ececea;"></div>
<div style="left:261px;top:462px;width:1px;height:16px;background:#d9d9d7;"></div>
<div style="left:318px;top:462px;width:1px;height:16px;background:#d9d9d7;"></div>
<div style="left:376px;top:462px;width:1px;height:16px;background:#d9d9d7;"></div>
<div style="left:434px;top:462px;width:1px;height:16px;background:#d9d9d7;"></div>
<div style="left:491px;top:462px;width:1px;height:16px;background:#d9d9d7;"></div>
<div style="left:549px;top:462px;width:1px;height:16px;background:#ececea;"></div>
<div style="left:18px;top:478px;width:532px;height:16px;background:#f1ebdd;border-top:1px solid #c3bf9b;border-bottom:1px solid #c3bf9b;border-right:1px solid #c3bf9b;"></div>
<div style="left:261px;top:494px;width:1px;height:16px;background:#d9d9d7;"></div>
<div style="left:318px;top:494px;width:1px;height:16px;background:#d9d9d7;"></div>
<div style="left:376px;top:494px;width:1px;height:16px;background:#d9d9d7;"></div>
<div style="left:434px;top:494px;width:1px;height:16px;background:#d9d9d7;"></div>
<div style="left:491px;top:494px;width:1px;height:16px;background:#d9d9d7;"></div>
<div style="left:549px;top:494px;width:1px;height:16px;background:#ececea;"></div>
<div style="left:18px;top:510px;width:532px;height:17px;background:#f1ebdd;border-top:1px solid #c3bf9b;border-bottom:1px solid #c3bf9b;border-right:1px solid #c3bf9b;"></div>
<div style="left:261px;top:527px;width:1px;height:16px;background:#d9d9d7;"></div>
<div style="left:318px;top:527px;width:1px;height:16px;background:#d9d9d7;"></div>
<div style="left:376px;top:527px;width:1px;height:16px;background:#d9d9d7;"></div>
<div style="left:434px;top:527px;width:1px;height:16px;background:#d9d9d7;"></div>
<div style="left:491px;top:527px;width:1px;height:16px;background:#d9d9d7;"></div>
<div style="left:549px;top:527px;width:1px;height:16px;background:#ececea;"></div>
<div style="left:18px;top:543px;width:532px;height:16px;background:#f1ebdd;border-top:1px solid #c3bf9b;border-bottom:1px solid #c3bf9b;border-right:1px solid #c3bf9b;"></div>
<div style="left:18px;top:575px;width:532px;height:1px;background:#d9d9d7;"></div>
<div style="left:261px;top:559px;width:1px;height:16px;background:#d9d9d7;"></div>
<div style="left:318px;top:559px;width:1px;height:16px;background:#d9d9d7;"></div>
<div style="left:376px;top:559px;width:1px;height:16px;background:#d9d9d7;"></div>
<div style="left:434px;top:559px;width:1px;height:16px;background:#d9d9d7;"></div>
<div style="left:491px;top:559px;width:1px;height:16px;background:#d9d9d7;"></div>
<div style="left:549px;top:559px;width:1px;height:17px;background:#ececea;"></div>
<div style="left:261px;top:576px;width:1px;height:17px;background:#d9d9d7;"></div>
<div style="left:318px;top:576px;width:1px;height:17px;background:#d9d9d7;"></div>
<div style="left:376px;top:576px;width:1px;height:17px;background:#d9d9d7;"></div>
<div style="left:434px;top:576px;width:1px;height:17px;background:#d9d9d7;"></div>
<div style="left:491px;top:576px;width:1px;height:17px;background:#d9d9d7;"></div>
<div style="left:549px;top:576px;width:1px;height:17px;background:#ececea;"></div>
<div style="left:18px;top:593px;width:532px;height:16px;background:#f1ebdd;border-top:1px solid #c3bf9b;border-bottom:1px solid #c3bf9b;border-right:1px solid #c3bf9b;"></div>
<div style="left:261.1px;top:165.5px;width:1px;height:23px;background:#d3cfa9;"></div>
<div style="left:318.1px;top:165.5px;width:1px;height:23px;background:#d3cfa9;"></div>
<div style="left:433.75px;top:165.5px;width:1px;height:23px;background:#d3cfa9;"></div>
<div style="left:376.0px;top:184px;width:1px;height:4.5px;background:#d3cfa9;"></div>
<div style="left:18.2px;top:164.6px;width:531.2px;height:1px;background:#d6d2b4;"></div>
<div style="left:261.1px;top:188.6px;width:1px;height:14.6px;background:#b9b9b9;"></div>
<div style="left:318.1px;top:188.6px;width:1px;height:14.6px;background:#b9b9b9;"></div>
<div style="left:376.0px;top:188.6px;width:1px;height:14.6px;background:#b9b9b9;"></div>
<div style="left:433.75px;top:188.6px;width:1px;height:14.6px;background:#b9b9b9;"></div>
<div style="left:491.25px;top:188.6px;width:1px;height:14.6px;background:#b9b9b9;"></div>
<div style="left:548.9px;top:119.6px;width:1px;height:45.4px;background:#8f98a6;"></div>
<div style="left:18px;top:132.0px;width:1px;height:468.0px;background:#a9bcd4;"></div>
<div style="left:18.2px;top:203.0px;width:781.8px;height:1px;background:#6c6c6c;"></div>
<div style="left:17px;top:217px;width:246px;height:26px;border:2px solid #1c1c24;"></div>
<div style="left:259.6px;top:240.2px;width:4px;height:4px;background:#16161e;border:0.6px solid #fff;"></div>
<span class="t" style="left:30px;top:136.75px;font-size:16.9px;line-height:23.7px;color:#960808;font-weight:bold;font-family:'DejaVu Sans Condensed','Liberation Sans',sans-serif;letter-spacing:-0.047px;">Arbeitsblatt Kosten für Küchenumbau</span>
<span class="t" style="left:29.6px;top:167.9px;font-size:10.4px;line-height:14.6px;color:#625f30;font-weight:bold;font-family:'DejaVu Sans Condensed','Liberation Sans',sans-serif;letter-spacing:0.100px;">Positionen</span>
<span class="t" style="left:272.6px;top:167.9px;font-size:10.4px;line-height:14.6px;color:#625f30;font-weight:bold;font-family:'DejaVu Sans Condensed','Liberation Sans',sans-serif;letter-spacing:-0.017px;">Anzahl</span>
<span class="t" style="left:321.6px;top:167.9px;font-size:10.4px;line-height:14.6px;color:#625f30;font-weight:bold;font-family:'DejaVu Sans Condensed','Liberation Sans',sans-serif;letter-spacing:0.066px;">Kosten pro Stück (€)</span>
<span class="t" style="left:444.4px;top:167.9px;font-size:10.4px;line-height:14.6px;color:#625f30;font-weight:bold;font-family:'DejaVu Sans Condensed','Liberation Sans',sans-serif;letter-spacing:0.150px;">Gesamtkosten (€)</span>
<span class="t" style="left:327.3px;top:190.85px;font-size:7.8px;line-height:10.9px;color:#fff;font-weight:bold;font-family:'DejaVu Sans Condensed','Liberation Sans',sans-serif;letter-spacing:0.136px;">Geschätzt</span>
<span class="t" style="left:382.6px;top:190.85px;font-size:7.8px;line-height:10.9px;color:#fff;font-weight:bold;font-family:'DejaVu Sans Condensed','Liberation Sans',sans-serif;letter-spacing:0.155px;">Tatsächlich</span>
<span class="t" style="left:442.7px;top:190.85px;font-size:7.8px;line-height:10.9px;color:#fff;font-weight:bold;font-family:'DejaVu Sans Condensed','Liberation Sans',sans-serif;letter-spacing:0.136px;">Geschätzt</span>
<span class="t" style="left:497.8px;top:190.85px;font-size:7.8px;line-height:10.9px;color:#fff;font-weight:bold;font-family:'DejaVu Sans Condensed','Liberation Sans',sans-serif;letter-spacing:0.155px;">Tatsächlich</span>
<span class="t" style="left:28.8px;top:204.9px;font-size:8.6px;line-height:12.0px;color:#111;font-weight:bold;font-family:'DejaVu Sans Condensed','Liberation Sans',sans-serif;letter-spacing:0.005px;">Schränke</span>
<span class="t" style="left:28.6px;top:226.25px;font-size:7.7px;line-height:10.8px;color:#1e1e1e;font-family:'DejaVu Sans Condensed','Liberation Sans',sans-serif;letter-spacing:-0.017px;">Unterschränke: Einbauküche, Standardausführung (Menge in m)</span>
<span class="t num" style="left:290.4px;top:224.5px;font-size:8.8px;line-height:12.3px;color:#1e1e1e;font-family:'DejaVu Sans Condensed','Liberation Sans',sans-serif;">25</span>
<span class="t num" style="left:347.85px;top:224.5px;font-size:8.8px;line-height:12.3px;color:#1e1e1e;font-family:'DejaVu Sans Condensed','Liberation Sans',sans-serif;">5,00</span>
<span class="t num" style="left:463.3px;top:224.5px;font-size:8.8px;line-height:12.3px;color:#1e1e1e;font-family:'DejaVu Sans Condensed','Liberation Sans',sans-serif;">125,00</span>
<span class="t num" style="left:520.88px;top:224.5px;font-size:8.8px;line-height:12.3px;color:#1e1e1e;font-family:'DejaVu Sans Condensed','Liberation Sans',sans-serif;">0,00</span>
<span class="t" style="left:28.6px;top:249.5px;font-size:7.7px;line-height:10.8px;color:#1e1e1e;font-family:'DejaVu Sans Condensed','Liberation Sans',sans-serif;letter-spacing:-0.029px;">Hängeschränke: Einbauküche, Standardausführung (Menge in m)</span>
<span class="t num" style="left:290.4px;top:247.75px;font-size:8.8px;line-height:12.3px;color:#1e1e1e;font-family:'DejaVu Sans Condensed','Liberation Sans',sans-serif;">25</span>
<span class="t num" style="left:347.85px;top:247.75px;font-size:8.8px;line-height:12.3px;color:#1e1e1e;font-family:'DejaVu Sans Condensed','Liberation Sans',sans-serif;">3,50</span>
<span class="t num" style="left:463.3px;top:247.75px;font-size:8.8px;line-height:12.3px;color:#1e1e1e;font-family:'DejaVu Sans Condensed','Liberation Sans',sans-serif;">87,50</span>
<span class="t num" style="left:520.88px;top:247.75px;font-size:8.8px;line-height:12.3px;color:#1e1e1e;font-family:'DejaVu Sans Condensed','Liberation Sans',sans-serif;">0,00</span>
<span class="t" style="left:28.8px;top:266.3px;font-size:8.6px;line-height:12.0px;color:#111;font-weight:bold;font-family:'DejaVu Sans Condensed','Liberation Sans',sans-serif;letter-spacing:0.012px;">Reinigung</span>
<span class="t" style="left:28.6px;top:284.23px;font-size:7.7px;line-height:10.8px;color:#1e1e1e;font-family:'DejaVu Sans Condensed','Liberation Sans',sans-serif;letter-spacing:-0.011px;">Geschirrspüler: Standardausführung</span>
<span class="t num" style="left:290.4px;top:282.98px;font-size:8.8px;line-height:12.3px;color:#1e1e1e;font-family:'DejaVu Sans Condensed','Liberation Sans',sans-serif;">1</span>
<span class="t num" style="left:347.85px;top:282.98px;font-size:8.8px;line-height:12.3px;color:#1e1e1e;font-family:'DejaVu Sans Condensed','Liberation Sans',sans-serif;">250,00</span>
<span class="t num" style="left:463.3px;top:282.98px;font-size:8.8px;line-height:12.3px;color:#1e1e1e;font-family:'DejaVu Sans Condensed','Liberation Sans',sans-serif;">250,00</span>
<span class="t num" style="left:520.88px;top:282.98px;font-size:8.8px;line-height:12.3px;color:#1e1e1e;font-family:'DejaVu Sans Condensed','Liberation Sans',sans-serif;">0,00</span>
<span class="t" style="left:28.6px;top:301.48px;font-size:7.7px;line-height:10.8px;color:#1e1e1e;font-family:'DejaVu Sans Condensed','Liberation Sans',sans-serif;letter-spacing:0.019px;">Abfallentsorgung: Standardausführung</span>
<span class="t num" style="left:290.4px;top:300.23px;font-size:8.8px;line-height:12.3px;color:#1e1e1e;font-family:'DejaVu Sans Condensed','Liberation Sans',sans-serif;">1</span>
<span class="t num" style="left:347.85px;top:300.23px;font-size:8.8px;line-height:12.3px;color:#1e1e1e;font-family:'DejaVu Sans Condensed','Liberation Sans',sans-serif;">175,00</span>
<span class="t num" style="left:463.3px;top:300.23px;font-size:8.8px;line-height:12.3px;color:#1e1e1e;font-family:'DejaVu Sans Condensed','Liberation Sans',sans-serif;">175,00</span>
<span class="t num" style="left:520.88px;top:300.23px;font-size:8.8px;line-height:12.3px;color:#1e1e1e;font-family:'DejaVu Sans Condensed','Liberation Sans',sans-serif;">0,00</span>
<span class="t" style="left:28.8px;top:316.0px;font-size:8.6px;line-height:12.0px;color:#111;font-weight:bold;font-family:'DejaVu Sans Condensed','Liberation Sans',sans-serif;letter-spacing:0.070px;">Kochgeräte</span>
<span class="t" style="left:28.6px;top:333.93px;font-size:7.7px;line-height:10.8px;color:#1e1e1e;font-family:'DejaVu Sans Condensed','Liberation Sans',sans-serif;letter-spacing:0.020px;">Herd: Einbau, Standardausführung</span>
<span class="t num" style="left:290.4px;top:332.68px;font-size:8.8px;line-height:12.3px;color:#1e1e1e;font-family:'DejaVu Sans Condensed','Liberation Sans',sans-serif;">1</span>
<span class="t num" style="left:347.85px;top:332.68px;font-size:8.8px;line-height:12.3px;color:#1e1e1e;font-family:'DejaVu Sans Condensed','Liberation Sans',sans-serif;">375,00</span>
<span class="t num" style="left:463.3px;top:332.68px;font-size:8.8px;line-height:12.3px;color:#1e1e1e;font-family:'DejaVu Sans Condensed','Liberation Sans',sans-serif;">375,00</span>
<span class="t num" style="left:520.88px;top:332.68px;font-size:8.8px;line-height:12.3px;color:#1e1e1e;font-family:'DejaVu Sans Condensed','Liberation Sans',sans-serif;">0,00</span>
<span class="t" style="left:28.6px;top:351.18px;font-size:7.7px;line-height:10.8px;color:#1e1e1e;font-family:'DejaVu Sans Condensed','Liberation Sans',sans-serif;letter-spacing:-0.028px;">Mikrowelle: Standardausführung</span>
<span class="t num" style="left:290.4px;top:349.93px;font-size:8.8px;line-height:12.3px;color:#1e1e1e;font-family:'DejaVu Sans Condensed','Liberation Sans',sans-serif;">1</span>
<span class="t num" style="left:347.85px;top:349.93px;font-size:8.8px;line-height:12.3px;color:#1e1e1e;font-family:'DejaVu Sans Condensed','Liberation Sans',sans-serif;">300,00</span>
<span class="t num" style="left:463.3px;top:349.93px;font-size:8.8px;line-height:12.3px;color:#1e1e1e;font-family:'DejaVu Sans Condensed','Liberation Sans',sans-serif;">300,00</span>
<span class="t num" style="left:520.88px;top:349.93px;font-size:8.8px;line-height:12.3px;color:#1e1e1e;font-family:'DejaVu Sans Condensed','Liberation Sans',sans-serif;">0,00</span>
<span class="t" style="left:28.8px;top:365.7px;font-size:8.6px;line-height:12.0px;color:#111;font-weight:bold;font-family:'DejaVu Sans Condensed','Liberation Sans',sans-serif;letter-spacing:-0.022px;">Arbeitsflächen</span>
<span class="t" style="left:28.6px;top:383.62px;font-size:7.7px;line-height:10.8px;color:#1e1e1e;font-family:'DejaVu Sans Condensed','Liberation Sans',sans-serif;letter-spacing:-0.015px;">Feste Oberfläche (Menge in m)</span>
<span class="t num" style="left:290.4px;top:382.38px;font-size:8.8px;line-height:12.3px;color:#1e1e1e;font-family:'DejaVu Sans Condensed','Liberation Sans',sans-serif;">23</span>
<span class="t num" style="left:347.85px;top:382.38px;font-size:8.8px;line-height:12.3px;color:#1e1e1e;font-family:'DejaVu Sans Condensed','Liberation Sans',sans-serif;">10,00</span>
<span class="t num" style="left:463.3px;top:382.38px;font-size:8.8px;line-height:12.3px;color:#1e1e1e;font-family:'DejaVu Sans Condensed','Liberation Sans',sans-serif;">230,00</span>
<span class="t num" style="left:520.88px;top:382.38px;font-size:8.8px;line-height:12.3px;color:#1e1e1e;font-family:'DejaVu Sans Condensed','Liberation Sans',sans-serif;">0,00</span>
<span class="t" style="left:28.8px;top:398.15px;font-size:8.6px;line-height:12.0px;color:#111;font-weight:bold;font-family:'DejaVu Sans Condensed','Liberation Sans',sans-serif;letter-spacing:0.194px;">Türen</span>
<span class="t" style="left:28.6px;top:416.07px;font-size:7.7px;line-height:10.8px;color:#1e1e1e;font-family:'DejaVu Sans Condensed','Liberation Sans',sans-serif;letter-spacing:0.084px;">Innen: Spanplatte, furniert</span>
<span class="t num" style="left:290.4px;top:414.82px;font-size:8.8px;line-height:12.3px;color:#1e1e1e;font-family:'DejaVu Sans Condensed','Liberation Sans',sans-serif;">1</span>
<span class="t num" style="left:347.85px;top:414.82px;font-size:8.8px;line-height:12.3px;color:#1e1e1e;font-family:'DejaVu Sans Condensed','Liberation Sans',sans-serif;">65,00</span>
<span class="t num" style="left:463.3px;top:414.82px;font-size:8.8px;line-height:12.3px;color:#1e1e1e;font-family:'DejaVu Sans Condensed','Liberation Sans',sans-serif;">65,00</span>
<span class="t num" style="left:520.88px;top:414.82px;font-size:8.8px;line-height:12.3px;color:#1e1e1e;font-family:'DejaVu Sans Condensed','Liberation Sans',sans-serif;">0,00</span>
<span class="t" style="left:28.8px;top:430.6px;font-size:8.6px;line-height:12.0px;color:#111;font-weight:bold;font-family:'DejaVu Sans Condensed','Liberation Sans',sans-serif;letter-spacing:-0.018px;">Extras</span>
<span class="t" style="left:28.6px;top:448.52px;font-size:7.7px;line-height:10.8px;color:#1e1e1e;font-family:'DejaVu Sans Condensed','Liberation Sans',sans-serif;letter-spacing:0.033px;">Extras: Durchlauferhitzer, Standardausführung</span>
<span class="t num" style="left:290.4px;top:447.27px;font-size:8.8px;line-height:12.3px;color:#1e1e1e;font-family:'DejaVu Sans Condensed','Liberation Sans',sans-serif;">1</span>
<span class="t num" style="left:347.85px;top:447.27px;font-size:8.8px;line-height:12.3px;color:#1e1e1e;font-family:'DejaVu Sans Condensed','Liberation Sans',sans-serif;">120,00</span>
<span class="t num" style="left:463.3px;top:447.27px;font-size:8.8px;line-height:12.3px;color:#1e1e1e;font-family:'DejaVu Sans Condensed','Liberation Sans',sans-serif;">120,00</span>
<span class="t num" style="left:520.88px;top:447.27px;font-size:8.8px;line-height:12.3px;color:#1e1e1e;font-family:'DejaVu Sans Condensed','Liberation Sans',sans-serif;">0,00</span>
<span class="t" style="left:28.6px;top:465.77px;font-size:7.7px;line-height:10.8px;color:#1e1e1e;font-family:'DejaVu Sans Condensed','Liberation Sans',sans-serif;letter-spacing:0.012px;">Extras: Seifenspender</span>
<span class="t num" style="left:290.4px;top:464.52px;font-size:8.8px;line-height:12.3px;color:#1e1e1e;font-family:'DejaVu Sans Condensed','Liberation Sans',sans-serif;">1</span>
<span class="t num" style="left:347.85px;top:464.52px;font-size:8.8px;line-height:12.3px;color:#1e1e1e;font-family:'DejaVu Sans Condensed','Liberation Sans',sans-serif;">40,00</span>
<span class="t num" style="left:463.3px;top:464.52px;font-size:8.8px;line-height:12.3px;color:#1e1e1e;font-family:'DejaVu Sans Condensed','Liberation Sans',sans-serif;">40,00</span>
<span class="t num" style="left:520.88px;top:464.52px;font-size:8.8px;line-height:12.3px;color:#1e1e1e;font-family:'DejaVu Sans Condensed','Liberation Sans',sans-serif;">0,00</span>
<span class="t" style="left:28.8px;top:480.3px;font-size:8.6px;line-height:12.0px;color:#111;font-weight:bold;font-family:'DejaVu Sans Condensed','Liberation Sans',sans-serif;letter-spacing:-0.044px;">Wasserhähne</span>
<span class="t" style="left:28.6px;top:498.22px;font-size:7.7px;line-height:10.8px;color:#1e1e1e;font-family:'DejaVu Sans Condensed','Liberation Sans',sans-serif;letter-spacing:0.052px;">Wasserhahn: Hebel, Standardausführung</span>
<span class="t num" style="left:290.4px;top:496.97px;font-size:8.8px;line-height:12.3px;color:#1e1e1e;font-family:'DejaVu Sans Condensed','Liberation Sans',sans-serif;">1</span>
<span class="t num" style="left:347.85px;top:496.97px;font-size:8.8px;line-height:12.3px;color:#1e1e1e;font-family:'DejaVu Sans Condensed','Liberation Sans',sans-serif;">130,00</span>
<span class="t num" style="left:463.3px;top:496.97px;font-size:8.8px;line-height:12.3px;color:#1e1e1e;font-family:'DejaVu Sans Condensed','Liberation Sans',sans-serif;">130,00</span>
<span class="t num" style="left:520.88px;top:496.97px;font-size:8.8px;line-height:12.3px;color:#1e1e1e;font-family:'DejaVu Sans Condensed','Liberation Sans',sans-serif;">0,00</span>
<span class="t" style="left:28.8px;top:512.75px;font-size:8.6px;line-height:12.0px;color:#111;font-weight:bold;font-family:'DejaVu Sans Condensed','Liberation Sans',sans-serif;">Fußbodenbelag</span>
<span class="t" style="left:28.6px;top:530.67px;font-size:7.7px;line-height:10.8px;color:#1e1e1e;font-family:'DejaVu Sans Condensed','Liberation Sans',sans-serif;letter-spacing:-0.160px;">Laminat (Menge in qm)</span>
<span class="t num" style="left:290.4px;top:529.42px;font-size:8.8px;line-height:12.3px;color:#1e1e1e;font-family:'DejaVu Sans Condensed','Liberation Sans',sans-serif;">165</span>
<span class="t num" style="left:347.85px;top:529.42px;font-size:8.8px;line-height:12.3px;color:#1e1e1e;font-family:'DejaVu Sans Condensed','Liberation Sans',sans-serif;">3,50</span>
<span class="t num" style="left:463.3px;top:529.42px;font-size:8.8px;line-height:12.3px;color:#1e1e1e;font-family:'DejaVu Sans Condensed','Liberation Sans',sans-serif;">577,50</span>
<span class="t num" style="left:520.88px;top:529.42px;font-size:8.8px;line-height:12.3px;color:#1e1e1e;font-family:'DejaVu Sans Condensed','Liberation Sans',sans-serif;">0,00</span>
<span class="t" style="left:28.8px;top:545.2px;font-size:8.6px;line-height:12.0px;color:#111;font-weight:bold;font-family:'DejaVu Sans Condensed','Liberation Sans',sans-serif;letter-spacing:-0.012px;">Geräte für Wäsche</span>
<span class="t" style="left:28.6px;top:563.12px;font-size:7.7px;line-height:10.8px;color:#1e1e1e;font-family:'DejaVu Sans Condensed','Liberation Sans',sans-serif;">Waschmaschine: Standardausführung</span>
<span class="t num" style="left:290.4px;top:561.88px;font-size:8.8px;line-height:12.3px;color:#1e1e1e;font-family:'DejaVu Sans Condensed','Liberation Sans',sans-serif;">1</span>
<span class="t num" style="left:347.85px;top:561.88px;font-size:8.8px;line-height:12.3px;color:#1e1e1e;font-family:'DejaVu Sans Condensed','Liberation Sans',sans-serif;">500,00</span>
<span class="t num" style="left:463.3px;top:561.88px;font-size:8.8px;line-height:12.3px;color:#1e1e1e;font-family:'DejaVu Sans Condensed','Liberation Sans',sans-serif;">500,00</span>
<span class="t num" style="left:520.88px;top:561.88px;font-size:8.8px;line-height:12.3px;color:#1e1e1e;font-family:'DejaVu Sans Condensed','Liberation Sans',sans-serif;">0,00</span>
<span class="t" style="left:28.6px;top:580.38px;font-size:7.7px;line-height:10.8px;color:#1e1e1e;font-family:'DejaVu Sans Condensed','Liberation Sans',sans-serif;letter-spacing:0.047px;">Wäschetrockner: Standardausführung</span>
<span class="t num" style="left:290.4px;top:579.12px;font-size:8.8px;line-height:12.3px;color:#1e1e1e;font-family:'DejaVu Sans Condensed','Liberation Sans',sans-serif;">1</span>
<span class="t num" style="left:347.85px;top:579.12px;font-size:8.8px;line-height:12.3px;color:#1e1e1e;font-family:'DejaVu Sans Condensed','Liberation Sans',sans-serif;">375,00</span>
<span class="t num" style="left:463.3px;top:579.12px;font-size:8.8px;line-height:12.3px;color:#1e1e1e;font-family:'DejaVu Sans Condensed','Liberation Sans',sans-serif;">375,00</span>
<span class="t num" style="left:520.88px;top:579.12px;font-size:8.8px;line-height:12.3px;color:#1e1e1e;font-family:'DejaVu Sans Condensed','Liberation Sans',sans-serif;">0,00</span>
<span class="t" style="left:28.8px;top:594.9px;font-size:8.6px;line-height:12.0px;color:#111;font-weight:bold;font-family:'DejaVu Sans Condensed','Liberation Sans',sans-serif;letter-spacing:0.030px;">Beleuchtung</span>
</div>
</body>
</html>
